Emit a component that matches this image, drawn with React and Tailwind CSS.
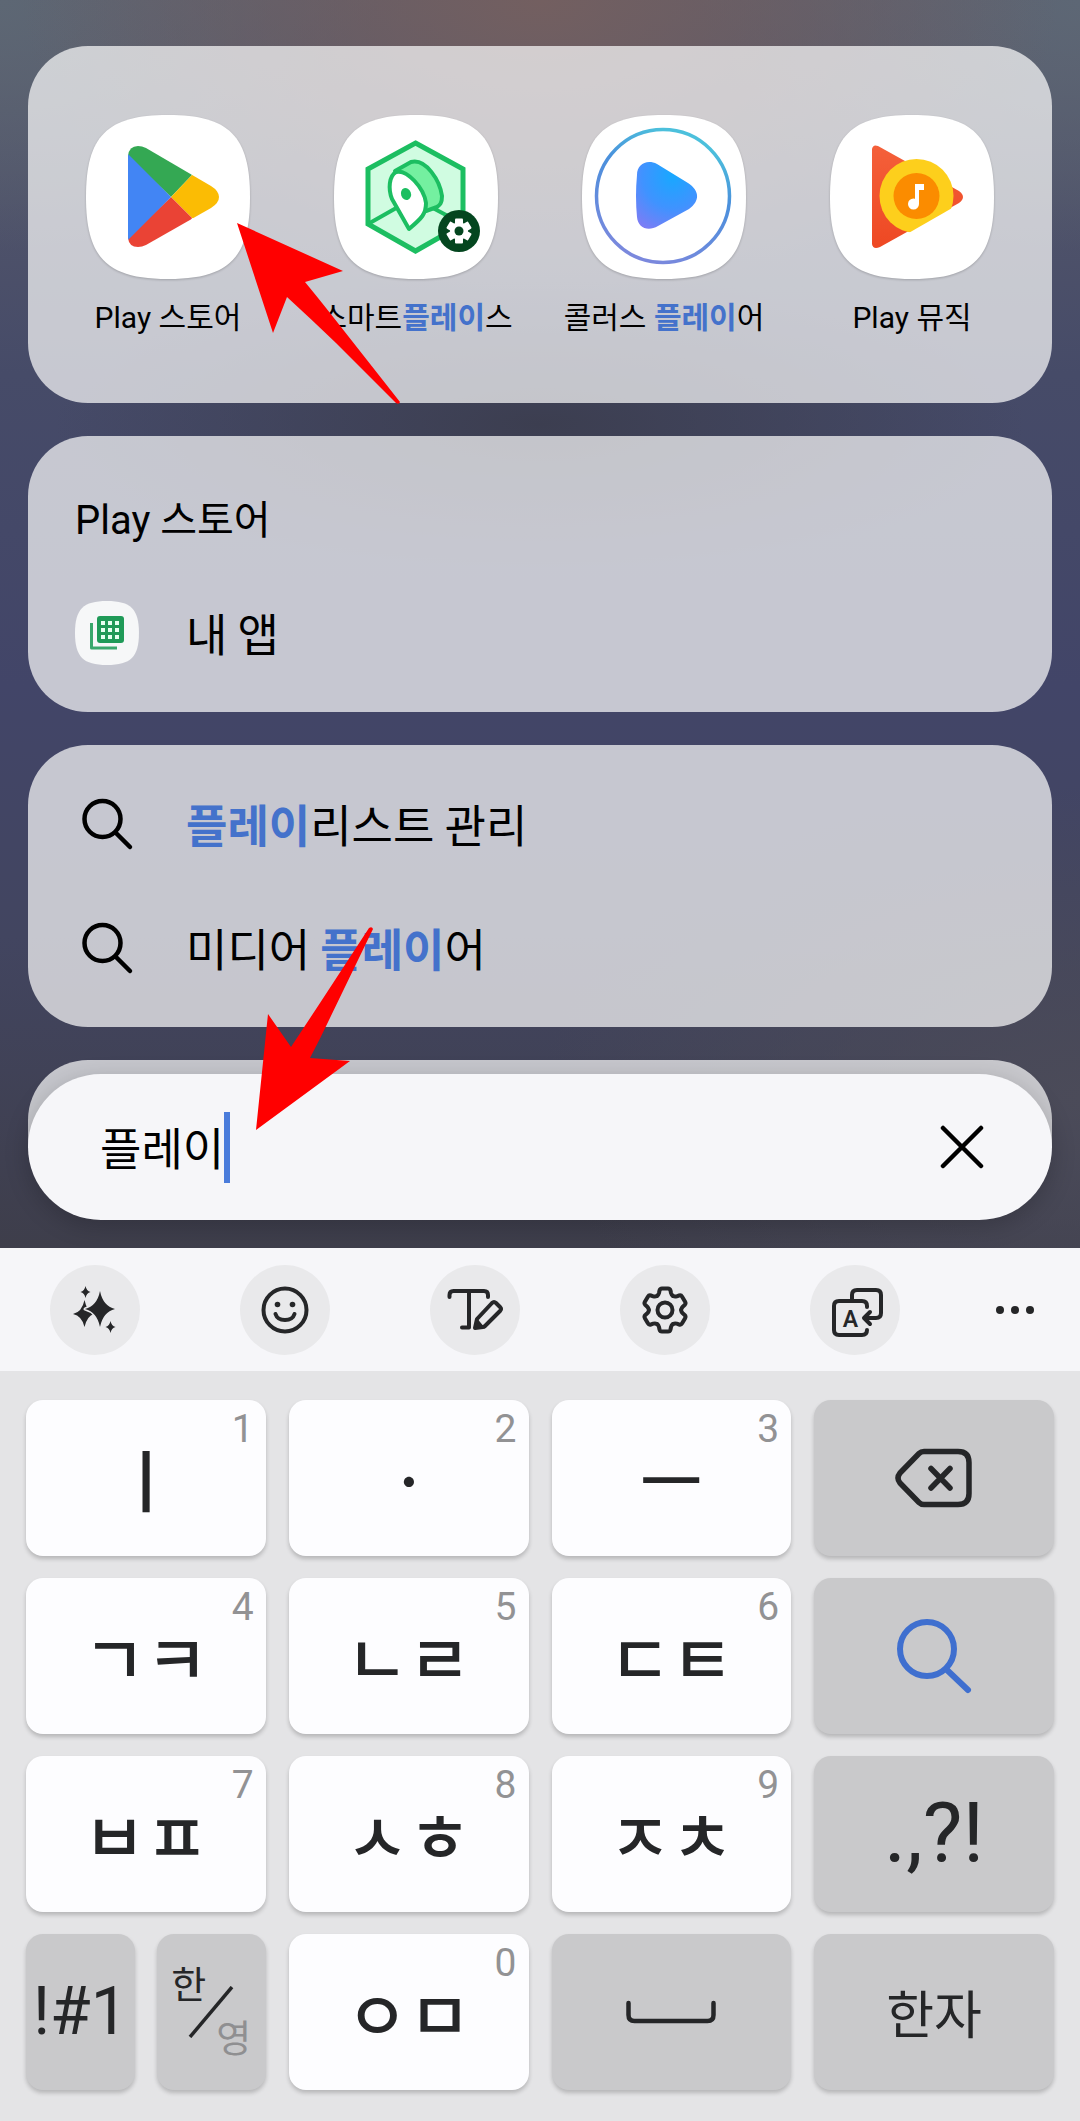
import { useState } from "react";

const SQUIRCLE =
  "M82 0C143 0 164 21 164 82C164 143 143 164 82 164C21 164 0 143 0 82C0 21 21 0 82 0Z";

function AppIcon({ children }) {
  return (
    <svg
      viewBox="0 0 164 164"
      className="size-[164px] overflow-visible drop-shadow-[0_1px_1px_rgba(0,0,0,0.2)]"
      aria-hidden="true"
    >
      <path d={SQUIRCLE} fill="#fff" />
      {children}
    </svg>
  );
}

function PlayStoreIcon() {
  return (
    <AppIcon>
      <clipPath id="playShape">
        <path d="M42 41Q43 31 52 31Q56 31 60 33L125 71Q133 76 133 82Q133 88 125 93L60 130Q56 132 52 132Q43 132 42 123Z" />
      </clipPath>
      <g clipPath="url(#playShape)">
        <path d="M40 20H90L106 60L85 82L42 41Z" fill="#34a853" />
        <path d="M85 82L106 60L140 50V115L106 103Z" fill="#fbbc04" />
        <path d="M85 82L106 103L90 140H40L42 123Z" fill="#ea4335" />
        <path d="M42 39L85 82L42 125Z" fill="#4285f4" />
      </g>
    </AppIcon>
  );
}

function SmartPlaceIcon() {
  return (
    <AppIcon>
      <g stroke="#1cbe61" strokeWidth="5" strokeLinejoin="round">
        <path d="M81.5 28L129 54V109L81.5 136L34 109V54Z" fill="#d0fce1" strokeLinejoin="miter" />
        <path d="M34 109L64 92M97 92L129 109" fill="none" strokeWidth="4" />
        <path
          d="M61 56L77 47C92 43 106 66 108 81C108 88 106 90 103 92L92 96Z"
          fill="#74f0a0"
          strokeWidth="4"
        />
        <path
          d="M75 114L58 84C54 74 55 61 62 57C73 54 90 73 92 88C92 99 88 103 75 114Z"
          fill="#fff"
          strokeWidth="4"
        />
      </g>
      <ellipse cx="72" cy="79" rx="5" ry="6" fill="#1cbe61" transform="rotate(-20 72 79)" />
      <circle cx="125" cy="116" r="21" fill="#04461f" />
      <g transform="translate(125 116)" fill="#fff">
        {[0, 60, 120].map((deg) => (
          <rect key={deg} x="-4" y="-12.5" width="8" height="25" rx="1" transform={`rotate(${deg})`} />
        ))}
        <circle r="9" />
        <circle r="4.5" fill="#04461f" />
      </g>
    </AppIcon>
  );
}

function KollusIcon() {
  return (
    <AppIcon>
      <linearGradient id="ring" x1="0.75" y1="0.1" x2="0.4" y2="1">
        <stop offset="0" stopColor="#4cc0dc" />
        <stop offset="0.35" stopColor="#4a90dc" />
        <stop offset="1" stopColor="#7b88dd" />
      </linearGradient>
      <radialGradient id="kollusPlay" cx="0.6" cy="0.2" r="0.9">
        <stop offset="0" stopColor="#18a8ff" />
        <stop offset="0.55" stopColor="#3f93ff" />
        <stop offset="1" stopColor="#7b7df5" />
      </radialGradient>
      <circle cx="81" cy="81" r="66.5" fill="none" stroke="url(#ring)" strokeWidth="3.5" />
      <path
        d="M55 60C55 49 65 44 75 49L106 68C118 76 118 86 107 94L76 111C66 117 56 113 55 102Q53 81 55 60Z"
        fill="url(#kollusPlay)"
      />
    </AppIcon>
  );
}

function PlayMusicIcon() {
  return (
    <AppIcon>
      <linearGradient id="musicRed" x1="0" y1="0" x2="0" y2="1">
        <stop offset="0" stopColor="#f4603a" />
        <stop offset="1" stopColor="#ee4823" />
      </linearGradient>
      <clipPath id="aboveEdge">
        <path d="M0 0H164V69L49 135H0Z" />
      </clipPath>
      <path
        d="M42 34Q43 29 48 31L129 76Q137 82 129 88L50 132Q43 135 42 129Z"
        fill="url(#musicRed)"
      />
      <g clipPath="url(#aboveEdge)">
        <circle cx="86.5" cy="81" r="37" fill="#fdcf1c" />
      </g>
      <circle cx="86.5" cy="81" r="23" fill="#fb8c00" />
      <circle cx="83.5" cy="89" r="5.5" fill="#fff" />
      <path d="M85 69H94V75H89V89H85Z" fill="#fff" />
    </AppIcon>
  );
}

function MyAppsIcon() {
  return (
    <svg viewBox="0 0 64 64" className="size-16 shrink-0" aria-hidden="true">
      <path d={SQUIRCLE} fill="#f6f7f8" transform="scale(0.39)" />
      <rect x="22" y="15" width="27" height="27" rx="3" fill="#1f9a58" />
      <path d="M16.5 22V47H42" fill="none" stroke="#3aa76c" strokeWidth="3" strokeLinejoin="round" />
      {[26, 33, 40].map((x) =>
        [20, 27, 34].map((y) => (
          <rect key={`${x}-${y}`} x={x} y={y} width="4" height="4" fill="#e6fff1" />
        )),
      )}
    </svg>
  );
}

function SearchIcon({ className }) {
  return (
    <svg
      viewBox="0 0 64 64"
      fill="none"
      stroke="currentColor"
      strokeWidth="4.5"
      strokeLinecap="round"
      className={className}
      aria-hidden="true"
    >
      <circle cx="27.5" cy="27" r="18" />
      <path d="M41 41L55 55" />
    </svg>
  );
}

function ToolSvg({ children }) {
  return (
    <svg
      viewBox="-30 -30 60 60"
      fill="none"
      stroke="#252628"
      strokeWidth="4"
      strokeLinecap="round"
      strokeLinejoin="round"
      className="size-[60px]"
      aria-hidden="true"
    >
      {children}
    </svg>
  );
}

const TOOLS = [
  {
    label: "AI 도구",
    icon: (
      <ToolSvg>
        <g fill="#252628" stroke="none">
          <path d="M-9.5 -24Q-8.5 -19 -4.5 -18Q-8.5 -17 -9.5 -12Q-10.5 -17 -14.5 -18Q-10.5 -19 -9.5 -24Z" />
          <path d="M-10.5 -10Q-8 2 -1 4Q-8 6 -10.5 17Q-13 6 -22 4Q-13 2 -10.5 -10Z" />
          <path d="M15.5 11Q16.5 16 20.5 17Q16.5 18 15.5 23Q14.5 18 10.5 17Q14.5 16 15.5 11Z" />
        </g>
        <path
          d="M5 -19Q8 -4 20 -1Q8 2 5 17Q2 2 -10 -1Q2 -4 5 -19Z"
          fill="#252628"
          stroke="#e9e9eb"
          strokeWidth="3"
          paintOrder="stroke"
        />
      </ToolSvg>
    ),
  },
  {
    label: "이모티콘",
    icon: (
      <ToolSvg>
        <circle r="21.5" />
        <g fill="#252628" stroke="none">
          <circle cx="-7.5" cy="-5.5" r="2.8" />
          <circle cx="7.5" cy="-5.5" r="2.8" />
        </g>
        <path d="M-9.5 4C-7 12 7 12 9.5 4" />
      </ToolSvg>
    ),
  },
  {
    label: "텍스트 편집",
    icon: (
      <ToolSvg>
        <path d="M-25.5 -13V-15Q-25.5 -19 -21.5 -19H9Q13 -19 13 -15V-13M-6 -19V17.5H-13" />
        <path d="M0 18L2 9L17 -7Q19 -9 21 -7L25 -3Q27 -1 25 1L10 16Q9 17 8 17Z" />
        <path d="M1 17L2 10L7 16Z" fill="#252628" strokeWidth="2" />
      </ToolSvg>
    ),
  },
  {
    label: "설정",
    icon: (
      <ToolSvg>
        <circle r="7.5" />
        {[0, 60, 120, 180, 240, 300].map((deg) => (
          <path
            key={deg}
            d="M-8 -14Q-6.5 -15 -6 -17L-5.5 -19.5Q-5 -21.5 -3 -21.5H3Q5 -21.5 5.5 -19.5L6 -17Q6.5 -15 8 -14"
            transform={`rotate(${deg})`}
          />
        ))}
      </ToolSvg>
    ),
  },
  {
    label: "번역",
    icon: (
      <ToolSvg>
        <path d="M-3 -10V-15Q-3 -20 2 -20H21Q26 -20 26 -15V3Q26 8 21 8H10M15 2L9 8L15 14" />
        <path d="M12 -3V-4Q12 -9 7 -9H-16Q-21 -9 -21 -4V20Q-21 25 -16 25H7Q12 25 12 20" />
        <text
          x="-4.5"
          y="17"
          textAnchor="middle"
          fontSize="23"
          fontWeight="600"
          fill="#252628"
          stroke="none"
        >
          A
        </text>
      </ToolSvg>
    ),
  },
];

const APPS = [
  { id: "store", icon: <PlayStoreIcon />, label: "Play 스토어" },
  { id: "smart", icon: <SmartPlaceIcon />, label: "스마트플레이스" },
  { id: "kollus", icon: <KollusIcon />, label: "콜러스 플레이어" },
  { id: "music", icon: <PlayMusicIcon />, label: "Play 뮤직" },
];

const SUGGESTIONS = ["플레이리스트 관리", "미디어 플레이어"];

function Highlight({ text, query }) {
  const at = query ? text.indexOf(query) : -1;
  if (at < 0) return text;
  return (
    <>
      {text.slice(0, at)}
      <b className="font-bold text-[#4472cb]">{query}</b>
      {text.slice(at + query.length)}
    </>
  );
}

function Card({ className, children }) {
  return (
    <section className={`rounded-[60px] bg-[#fcfcfc]/71 ${className}`}>{children}</section>
  );
}

function Key({ label, hint, dark, children }) {
  return (
    <button
      type="button"
      aria-label={label}
      className={`relative flex h-[156px] min-w-0 flex-1 items-center justify-center rounded-[17px] shadow-[0_3px_4px_rgba(0,0,0,0.2)] ${
        dark ? "bg-[#c9c9cb]" : "bg-[#fdfdff]"
      }`}
    >
      {hint && (
        <span className="absolute top-[9px] right-3 text-[39px] leading-10 text-[#929294]">
          {hint}
        </span>
      )}
      {children}
    </button>
  );
}

function LetterKey({ text, hint }) {
  return (
    <Key hint={hint}>
      <span className="font-['Noto_Sans_CJK_KR',sans-serif] text-[68px] leading-none font-medium">
        {text}
      </span>
    </Key>
  );
}

function Keyboard() {
  return (
    <div className="grid grow grid-cols-4 content-start gap-x-[23px] gap-y-[22px] bg-[#e4e4e6] px-[26px] pt-[29px] pb-8 text-[#252628]">
      <LetterKey text="ㅣ" hint="1" />
      <LetterKey text="ㆍ" hint="2" />
      <LetterKey text="ㅡ" hint="3" />
      <Key dark label="삭제">
        <svg
          viewBox="0 0 78 60"
          fill="none"
          stroke="currentColor"
          strokeWidth="5.5"
          strokeLinecap="round"
          strokeLinejoin="round"
          className="h-[60px] w-[78px]"
        >
          <path d="M29 3.5H63Q74 3.5 74 14.5V45.5Q74 56.5 63 56.5H29Q26 56.5 24 54.5L5 35Q1 30 5 25L24 5.5Q26 3.5 29 3.5Z" />
          <path d="M36 20.5L55 40M55 20.5L36 40" />
        </svg>
      </Key>

      <LetterKey text="ㄱㅋ" hint="4" />
      <LetterKey text="ㄴㄹ" hint="5" />
      <LetterKey text="ㄷㅌ" hint="6" />
      <Key dark label="검색">
        <svg
          viewBox="0 0 78 78"
          fill="none"
          stroke="#3f6fcf"
          strokeWidth="6"
          strokeLinecap="round"
          className="size-[78px]"
        >
          <circle cx="32" cy="32" r="27" />
          <path d="M52 53L73 73" />
        </svg>
      </Key>

      <LetterKey text="ㅂㅍ" hint="7" />
      <LetterKey text="ㅅㅎ" hint="8" />
      <LetterKey text="ㅈㅊ" hint="9" />
      <Key dark>
        <span className="text-[84px] leading-none">.,?!</span>
      </Key>

      <div className="flex gap-[22px]">
        <Key dark>
          <span className="text-[66px] leading-none">!#1</span>
        </Key>
        <Key dark>
          <span className="flex w-20 flex-col text-[38px] leading-[54px]">
            <span className="self-start">한</span>
            <span className="self-end text-[#8f8f91]">영</span>
          </span>
          <svg
            viewBox="0 0 46 52"
            stroke="currentColor"
            strokeWidth="3.5"
            className="absolute h-[52px] w-[46px]"
          >
            <path d="M2 51L44 1" />
          </svg>
        </Key>
      </div>
      <LetterKey text="ㅇㅁ" hint="0" />
      <Key dark label="스페이스">
        <svg
          viewBox="0 0 90 24"
          fill="none"
          stroke="currentColor"
          strokeWidth="4.5"
          strokeLinecap="round"
          className="h-6 w-[90px]"
        >
          <path d="M2.5 3V15Q2.5 21 8.5 21H81.5Q87.5 21 87.5 15V3" />
        </svg>
      </Key>
      <Key dark>
        <span className="font-['Noto_Sans_CJK_KR',sans-serif] text-[52px] leading-none">한자</span>
      </Key>
    </div>
  );
}

export default function App() {
  const [query, setQuery] = useState("플레이");

  return (
    <div className="relative flex min-h-screen flex-col overflow-hidden bg-[#43455c] font-['Roboto','Noto_Sans_CJK_KR',sans-serif] text-black">
      <main className="flex flex-col gap-[33px] bg-[radial-gradient(ellipse_48%_24%_at_50%_0%,#735f60,transparent),radial-gradient(ellipse_35%_20%_at_0%_0%,#5d6774,transparent),radial-gradient(ellipse_35%_20%_at_100%_0%,#5d6775,transparent),radial-gradient(ellipse_45%_12%_at_50%_34%,#3c3e50,transparent),radial-gradient(ellipse_50%_25%_at_100%_88%,#4b4b59,transparent),linear-gradient(#5a5c6c,#464b68_30%,#424568_55%,#424560_75%,#3e3e4b)] px-7 pt-[46px] pb-7">
        <Card className="grid grid-cols-4 px-4 pt-[69px] pb-[63px]">
          {APPS.map((app) => (
            <button key={app.id} type="button" className="flex flex-col items-center gap-4">
              {app.icon}
              <span className="text-[30px] leading-[45px] whitespace-nowrap">
                <Highlight text={app.label} query={query} />
              </span>
            </button>
          ))}
        </Card>

        <Card className="px-[47px] pt-[55px] pb-[17px]">
          <h2 className="text-[40px] leading-[60px]">Play 스토어</h2>
          <a
            href="#my-apps"
            className="mt-5 flex h-[124px] items-center gap-[47px] font-['Noto_Sans_CJK_KR',sans-serif] text-[45px]"
          >
            <MyAppsIcon />내 앱
          </a>
        </Card>

        <Card className="px-[47px] py-[17px]">
          {SUGGESTIONS.map((text) => (
            <a
              key={text}
              href="#suggestion"
              className="flex h-[124px] items-center gap-[47px] font-['Noto_Sans_CJK_KR',sans-serif] text-[45px]"
            >
              <SearchIcon className="size-16 shrink-0" />
              <span>
                <Highlight text={text} query={query} />
              </span>
            </a>
          ))}
        </Card>

        <div>
          <div className="h-[88px] rounded-t-[60px] bg-[#fcfcfc]/71" />
          <form className="relative -mt-[74px] flex h-[146px] items-center rounded-full bg-[#f6f6f9] pr-14 pl-[72px] shadow-[0_6px_24px_rgba(0,0,0,0.2)]">
            <input
              type="text"
              aria-label="검색"
              value={query}
              onChange={(e) => setQuery(e.target.value)}
              className="field-sizing-content font-['Noto_Sans_CJK_KR',sans-serif] text-[45px] outline-none"
            />
            {/* 커서 */}
            <span className="h-[71px] w-[6px] bg-[#4a7cdb]" />
            <button
              type="button"
              aria-label="지우기"
              onClick={() => setQuery("")}
              className="ml-auto flex size-[68px] items-center justify-center"
            >
              <svg
                viewBox="0 0 44 44"
                stroke="currentColor"
                strokeWidth="4.5"
                strokeLinecap="round"
                className="size-11"
              >
                <path d="M3 3L41 41M41 3L3 41" />
              </svg>
            </button>
          </form>
        </div>
      </main>

      <div className="flex h-[123px] items-center justify-between bg-[#f6f6f9] pr-[38px] pl-[50px]">
        {TOOLS.map((tool) => (
          <button
            key={tool.label}
            type="button"
            aria-label={tool.label}
            className="flex size-[90px] items-center justify-center rounded-full bg-[#e9e9eb]"
          >
            {tool.icon}
          </button>
        ))}
        <button type="button" aria-label="더보기" className="-ml-3">
          <svg viewBox="0 0 54 20" fill="#252628" className="h-5 w-[54px]">
            <circle cx="12" cy="10" r="4" />
            <circle cx="27" cy="10" r="4" />
            <circle cx="42" cy="10" r="4" />
          </svg>
        </button>
      </div>

      <Keyboard />

      {/* 안내 화살표 */}
      <svg
        viewBox="0 0 163 181"
        fill="#f00"
        className="pointer-events-none absolute top-[223px] left-[237px] h-[181px] w-[163px]"
        aria-hidden="true"
      >
        <path d="M0 0L106 48L68 59Q82 76 93 90L163 179Q162 182 159 180L99 120Q74 96 50 74L36 110Z" />
      </svg>
      <svg
        viewBox="0 0 117 203"
        fill="#f00"
        className="pointer-events-none absolute top-[927px] left-[256px] h-[203px] w-[117px]"
        aria-hidden="true"
      >
        <path d="M0 203L94 134L54 131Q64 112 73 93L117 2Q116 -1 113 1L64 76L35 120L12 87Z" />
      </svg>
    </div>
  );
}
